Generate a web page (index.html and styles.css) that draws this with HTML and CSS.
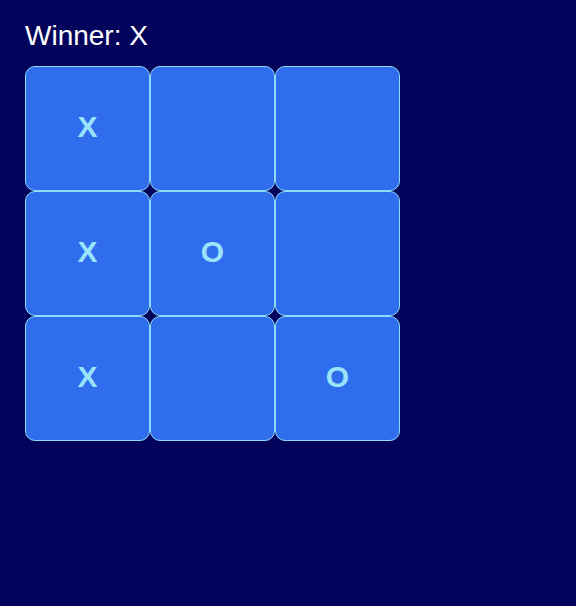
FILE: index.html
```html
<!DOCTYPE html>
<html>
<head>
<meta charset="utf-8">
<link rel="stylesheet" href="styles.css">
</head>
<body>
<div class="game">
  <div class="status">Winner: X</div>
  <div class="board">
    <button class="cell">X</button>
    <button class="cell"></button>
    <button class="cell"></button>
    <button class="cell">X</button>
    <button class="cell">O</button>
    <button class="cell"></button>
    <button class="cell">X</button>
    <button class="cell"></button>
    <button class="cell">O</button>
  </div>
</div>
</body>
</html>
```
FILE: styles.css
```css
html, body {
  margin: 0;
  padding: 0;
  background: #03035c;
  height: 100%;
}
.game {
  padding: 20px 25px;
  font-family: "Liberation Sans", Arial, sans-serif;
}
.status {
  color: #ffffff;
  font-size: 28px;
  line-height: 32px;
  margin-bottom: 14px;
}
.board {
  display: grid;
  grid-template-columns: repeat(3, 125px);
  grid-template-rows: repeat(3, 125px);
}
.cell {
  box-sizing: border-box;
  width: 125px;
  height: 125px;
  margin: 0;
  padding: 0 0 3px 0;
  background: #2f6ded;
  border: 1px solid #8fdcf7;
  border-radius: 10px;
  color: #9ae4fb;
  font-family: "Liberation Sans", Arial, sans-serif;
  font-weight: bold;
  font-size: 30px;
  cursor: pointer;
}
```
